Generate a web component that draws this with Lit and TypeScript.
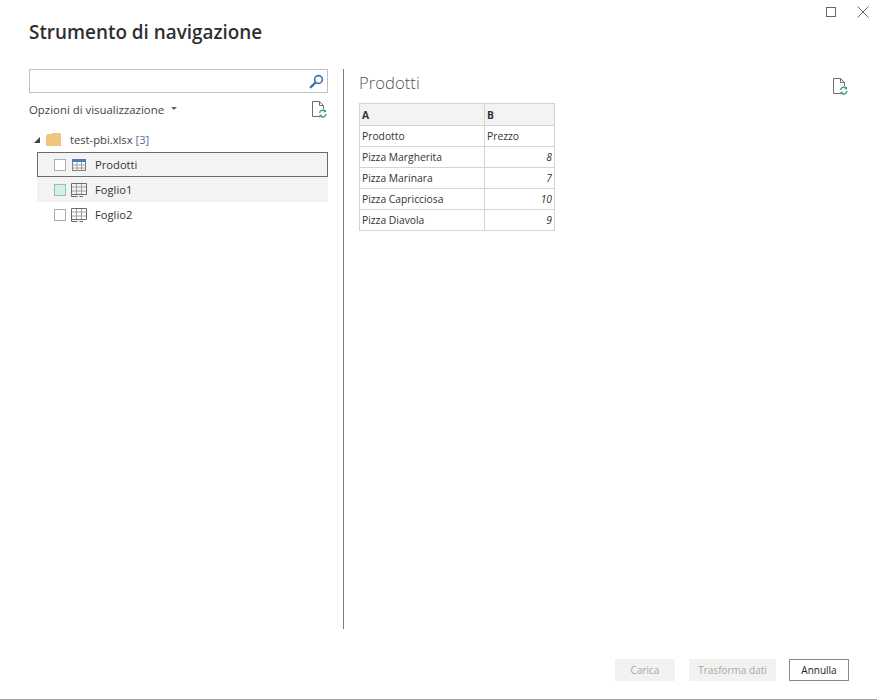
import { LitElement, html, css, svg } from "lit";
import { customElement } from "lit/decorators.js";

const refreshDoc = svg`
  <svg class="doc" width="16" height="18" viewBox="0 0 16 18" fill="none">
    <path d="M9 15.5H1.5V.5H8.5L12.5 4.5V8M8.5 .5V4.5H12.5" stroke="#6e6e6e"/>
    <path d="M8.5 12A3.2 3.2 0 0 1 14 10.2M15 13A3.2 3.2 0 0 1 9.5 15" stroke="#3f9a78" stroke-width="1.4"/>
    <path d="M15 8.3V11.2H12.2ZM8.5 16.7V13.8H11.3Z" fill="#3f9a78"/>
  </svg>`;

const sheetIcon = svg`
  <svg width="16" height="14" viewBox="0 0 16 14" fill="none">
    <path d="M.5 4H15.5M.5 8H15.5M5.5 .5V11.5M10.5 .5V11.5" stroke="#a0a0a0"/>
    <path d="M.5 11.5V.5H15.5V11.5H.5" stroke="#6b6b6b"/>
    <path d="M.5 11.5V13.5H6.5M8.5 13.5H12" stroke="#6b6b6b"/>
  </svg>`;

const tableIcon = svg`
  <svg width="14" height="12" viewBox="0 0 14 12" fill="none">
    <rect x=".5" y=".5" width="13" height="11" fill="#fff" stroke="#7a7a7a"/>
    <path d="M5 3V12M9.5 3V12M0 6H14M0 9H14" stroke="#9a9a9a"/>
    <rect width="14" height="3" fill="#4a7ebb"/>
  </svg>`;

@customElement("app-root")
export class AppRoot extends LitElement {
  static styles = css`
    :host {
      display: flex;
      flex-direction: column;
      width: 877px;
      height: 700px;
      box-sizing: border-box;
      background: #fff;
      border-bottom: 1px solid #a3a3a3;
      font-family: "Open Sans", "Noto Sans", sans-serif;
      font-size: 11.2px;
      color: #333;
      overflow: hidden;
    }
    .winbar {
      display: flex;
      justify-content: flex-end;
      align-items: center;
      gap: 21px;
      height: 24px;
      padding-right: 8px;
    }
    .winbar svg { display: block; }
    h1 {
      margin: 0;
      padding: 0 0 0 29px;
      height: 45px;
      line-height: 16px;
      font-size: 18.9px;
      font-weight: 600;
      color: #2f2f2f;
      white-space: nowrap;
    }
    .main {
      display: flex;
      height: 560px;
      padding-left: 29px;
    }
    .left {
      width: 299px;
      flex: none;
    }
    .search {
      display: flex;
      justify-content: flex-end;
      align-items: center;
      box-sizing: border-box;
      height: 24px;
      border: 1px solid #c2c2c2;
      padding-right: 3px;
    }
    .options {
      display: flex;
      align-items: center;
      height: 33px;
      padding-right: 1px;
      color: #444;
      font-size: 11.4px;
    }
    .options .label { margin-right: 7px; }
    .caret {
      width: 0;
      height: 0;
      border-left: 3px solid transparent;
      border-right: 3px solid transparent;
      border-top: 3px solid #666;
      margin-bottom: 2px;
    }
    .options .doc { margin-left: auto; }
    .root {
      display: flex;
      align-items: center;
      height: 25px;
      margin-top: 1px;
      padding-left: 5px;
      color: #444;
    }
    .tri {
      width: 0;
      height: 0;
      border-left: 6px solid transparent;
      border-bottom: 6px solid #444;
      margin-right: 6px;
    }
    .root svg { margin-right: 9px; }
    .root .count { color: #5a6f90; margin-left: 3px; }
    .tree-row {
      display: flex;
      align-items: center;
      box-sizing: border-box;
      height: 25px;
      margin-left: 8px;
      padding-left: 17px;
      color: #333;
    }
    .tree-row.selected {
      border: 1px solid #6b6b6b;
      background: #f3f3f3;
      padding-left: 16px;
    }
    .tree-row.hover { background: #f3f3f3; }
    .check {
      box-sizing: border-box;
      width: 12px;
      height: 12px;
      border: 1px solid #adadad;
      background: #fff;
      margin-right: 5px;
    }
    .check.on {
      background: #d5efe2;
      border-color: #8cc6a8;
    }
    .ico {
      display: flex;
      justify-content: center;
      width: 16px;
      margin-right: 8px;
    }
    .divider {
      width: 1px;
      background: #7d7d7d;
      margin-left: 15px;
      flex: none;
    }
    .right {
      flex: 1;
      padding-left: 15px;
      padding-right: 29px;
      min-width: 0;
    }
    .preview-head {
      display: flex;
      justify-content: space-between;
      align-items: flex-start;
      height: 34px;
    }
    h2 {
      margin: 0;
      font-size: 16.7px;
      font-weight: 300;
      line-height: 28px;
      color: #555;
    }
    .preview-head .doc { margin-top: 9px; }
    table {
      border-collapse: collapse;
      table-layout: fixed;
      width: 195px;
      font-size: 10.3px;
      color: #333;
    }
    th, td {
      border: 1px solid #d4d4d4;
      padding: 0 2px;
      height: 21px;
      box-sizing: border-box;
      text-align: left;
      white-space: nowrap;
      overflow: hidden;
    }
    th {
      background: #f3f3f3;
      height: 22px;
      font-weight: 700;
    }
    td.num {
      text-align: right;
      font-style: italic;
    }
    .footer {
      display: flex;
      justify-content: flex-end;
      gap: 13px;
      padding-top: 30px;
      padding-right: 28px;
    }
    .btn {
      display: flex;
      align-items: center;
      justify-content: center;
      box-sizing: border-box;
      height: 22px;
      font-size: 10px;
      background: #f3f2f1;
      color: #a9a6a4;
    }
    .btn.load { width: 60px; margin-right: 1px; }
    .btn.transform { width: 87px; }
    .btn.cancel {
      width: 60px;
      background: #fff;
      border: 1px solid #8a8a8a;
      color: #222;
    }
  `;

  render() {
    return html`
      <div class="winbar">
        <svg width="10" height="10" viewBox="0 0 10 10" fill="none" stroke="#666">
          <rect x=".5" y=".5" width="9" height="9" />
        </svg>
        <svg width="12" height="12" viewBox="0 0 12 12" fill="none" stroke="#666">
          <path d="M.5 .5L11.5 11.5M11.5 .5L.5 11.5" />
        </svg>
      </div>
      <h1>Strumento di navigazione</h1>
      <div class="main">
        <div class="left">
          <div class="search">
            <svg width="15" height="15" viewBox="0 0 15 15" fill="none">
              <circle cx="9.5" cy="5.5" r="3.9" stroke="#3f74ad" stroke-width="1.6" />
              <path d="M6.5 8.5L1.8 13.2" stroke="#3f74ad" stroke-width="2.4" stroke-linecap="round" />
            </svg>
          </div>
          <div class="options">
            <span class="label">Opzioni di visualizzazione</span>
            <span class="caret"></span>
            ${refreshDoc}
          </div>
          <div class="root">
            <span class="tri"></span>
            <svg width="15" height="13" viewBox="0 0 15 13">
              <path d="M0 2.5H1V1H6V0H14V1H15V13H0Z" fill="#eec57e" />
            </svg>
            <span>test-pbi.xlsx</span><span class="count">[3]</span>
          </div>
          <div class="tree-row selected">
            <span class="check"></span>
            <span class="ico">${tableIcon}</span>
            <span>Prodotti</span>
          </div>
          <div class="tree-row hover">
            <span class="check on"></span>
            <span class="ico">${sheetIcon}</span>
            <span>Foglio1</span>
          </div>
          <div class="tree-row">
            <span class="check"></span>
            <span class="ico">${sheetIcon}</span>
            <span>Foglio2</span>
          </div>
        </div>
        <div class="divider"></div>
        <div class="right">
          <div class="preview-head">
            <h2>Prodotti</h2>
            ${refreshDoc}
          </div>
          <table>
            <colgroup><col style="width:125px" /><col style="width:70px" /></colgroup>
            <tr><th>A</th><th>B</th></tr>
            <tr><td>Prodotto</td><td>Prezzo</td></tr>
            <tr><td>Pizza Margherita</td><td class="num">8</td></tr>
            <tr><td>Pizza Marinara</td><td class="num">7</td></tr>
            <tr><td>Pizza Capricciosa</td><td class="num">10</td></tr>
            <tr><td>Pizza Diavola</td><td class="num">9</td></tr>
          </table>
        </div>
      </div>
      <div class="footer">
        <div class="btn load">Carica</div>
        <div class="btn transform">Trasforma dati</div>
        <div class="btn cancel">Annulla</div>
      </div>
    `;
  }
}
